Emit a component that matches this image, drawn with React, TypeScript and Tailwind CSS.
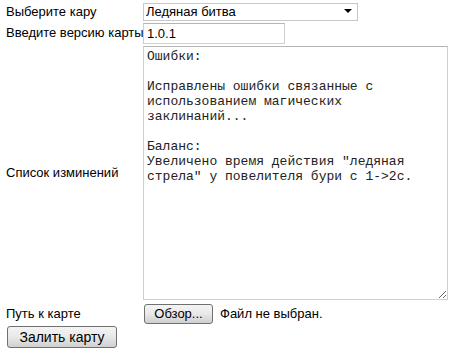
const text = `Ошибки:

Исправлены ошибки связанные с
использованием магических
заклинаний...

Баланс:
Увеличено время действия "ледяная
стрела" у повелителя бури с 1->2с.`;

const btn =
  "rounded-[3px] border border-[#707070] bg-gradient-to-b from-[#f4f4f4] via-[#e8e8e8] to-[#cfcfcf] text-black text-[13px] leading-none";

export default function App() {
  return (
    <div className="w-[460px] h-[355px] bg-white text-black text-[13px] font-['Liberation_Sans',Arial,sans-serif]">
      <div className="grid grid-cols-[143px_auto] pt-[2px]">
        <div className="flex items-center pl-[6px]">Выберите кару</div>
        <div className="relative w-[215px] h-[18px]">
          <select
            defaultValue="ice"
            className="appearance-none w-full h-full border border-[#c8c8c8] bg-white pl-[2px] text-[13px] leading-none outline-none"
          >
            <option value="ice">Ледяная битва</option>
          </select>
          <span className="pointer-events-none absolute right-[6px] top-[7px] w-0 h-0 border-l-[4px] border-r-[4px] border-t-[4px] border-l-transparent border-r-transparent border-t-black" />
        </div>

        <div className="flex items-center pl-[6px] mt-[1px] whitespace-nowrap">Введите версию карты</div>
        <input
          defaultValue="1.0.1"
          className="mt-[1px] w-[142px] h-[21px] border border-[#cfcfcf] border-t-[#b5b5b5] px-[3px] text-[13px] outline-none"
        />

        <div className="flex items-center pl-[6px] mt-[2px]">Список изминений</div>
        <textarea
          defaultValue={text}
          className="mt-[2px] w-[305px] h-[254px] border border-[#cfcfcf] border-t-[#b5b5b5] px-[3px] pt-[2px] font-['Liberation_Mono','Courier_New',monospace] text-[13px] leading-[15px] text-[#222] resize outline-none"
        />

        <div className="flex items-center pl-[6px] mt-[4px]">Путь к карте</div>
        <div className="flex items-center gap-[7px] h-[20px] mt-[4px] pl-[1px]">
          <button className={`${btn} w-[69px] h-[20px]`}>Обзор...</button>
          <span>Файл не выбран.</span>
        </div>
      </div>
      <div className="pl-[7px] mt-[2px]">
        <button className={`${btn} w-[110px] h-[22px] text-[14px]`}>Залить карту</button>
      </div>
    </div>
  );
}
